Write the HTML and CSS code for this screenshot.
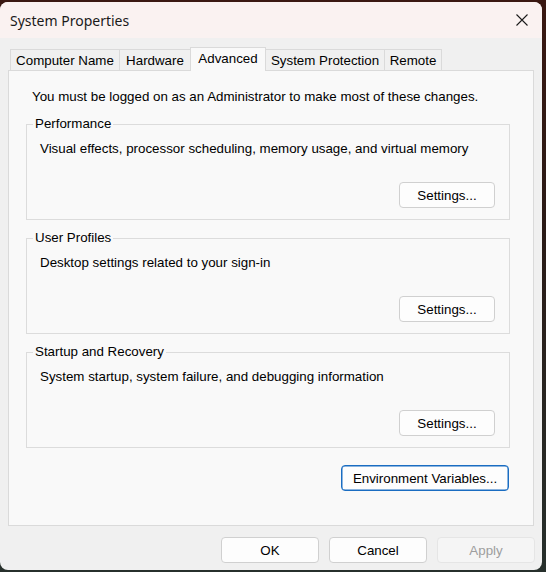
FILE: index.html
```html
<!DOCTYPE html>
<html lang="en">
<head>
<meta charset="utf-8">
<title>System Properties</title>
<link rel="stylesheet" href="styles.css">
</head>
<body>
<div class="window">
  <div class="titlebar">
    <span class="title">System Properties</span>
    <button class="close" aria-label="Close">
      <svg width="12" height="12" viewBox="0 0 12 12"><path d="M0.5 0.5 L11.5 11.5 M11.5 0.5 L0.5 11.5" stroke="#1b1b1b" stroke-width="1.1" fill="none"/></svg>
    </button>
  </div>
  <div class="content">
    <div class="tabs">
      <div class="tab tab-name">Computer Name</div>
      <div class="tab tab-hardware">Hardware</div>
      <div class="tab tab-advanced selected">Advanced</div>
      <div class="tab tab-protection">System Protection</div>
      <div class="tab tab-remote">Remote</div>
    </div>
    <div class="panel">
      <p class="intro">You must be logged on as an Administrator to make most of these changes.</p>
      <fieldset class="group">
        <legend>Performance</legend>
        <p class="desc">Visual effects, processor scheduling, memory usage, and virtual memory</p>
        <div class="group-actions"><button class="btn btn-settings">Settings...</button></div>
      </fieldset>
      <fieldset class="group">
        <legend>User Profiles</legend>
        <p class="desc">Desktop settings related to your sign-in</p>
        <div class="group-actions"><button class="btn btn-settings">Settings...</button></div>
      </fieldset>
      <fieldset class="group">
        <legend>Startup and Recovery</legend>
        <p class="desc">System startup, system failure, and debugging information</p>
        <div class="group-actions"><button class="btn btn-settings">Settings...</button></div>
      </fieldset>
      <div class="panel-actions"><button class="btn btn-env">Environment Variables...</button></div>
    </div>
    <div class="dialog-actions">
      <button class="btn btn-dialog">OK</button>
      <button class="btn btn-dialog">Cancel</button>
      <button class="btn btn-dialog disabled" disabled>Apply</button>
    </div>
  </div>
</div>
</body>
</html>
```
FILE: styles.css
```css
html, body {
  margin: 0;
  height: 100%;
}

body {
  box-sizing: border-box;
  padding-top: 2px;
  background: linear-gradient(180deg, #3a1812 0%, #2a1a16 40%, #27302c 100%);
  font-family: "Liberation Sans", Arial, sans-serif;
  font-size: 13.33px;
  color: #000;
  overflow: hidden;
}

.window {
  width: 542px;
  height: 568px;
  background: #f0f0f0;
  border-radius: 8px;
  overflow: hidden;
  display: flex;
  flex-direction: column;
}

/* title bar */
.titlebar {
  height: 36px;
  flex: none;
  background: #faf2f1;
  display: flex;
  align-items: center;
  justify-content: space-between;
  padding: 0 14px 0 10px;
}

.title {
  font-family: "Noto Sans", "Open Sans", sans-serif;
  font-size: 14px;
  color: #1a1a1a;
}

.close {
  border: 0;
  background: none;
  padding: 0;
  width: 12px;
  height: 12px;
  display: block;
}

.close svg {
  display: block;
}

/* dialog body */
.content {
  flex: 1;
  display: flex;
  flex-direction: column;
  padding: 9px 8px 0;
}

.tabs {
  position: relative;
  z-index: 1;
  height: 24px;
  margin-bottom: -1px;
  padding-left: 2px;
  display: flex;
  align-items: flex-end;
}

.tab {
  box-sizing: border-box;
  height: 21px;
  margin-bottom: 1px;
  border: 1px solid #dadada;
  border-bottom: 0;
  background: #f0f0f0;
  line-height: 21px;
  text-align: center;
  white-space: nowrap;
}

.tab + .tab {
  margin-left: -1px;
}

.tab-name { width: 110px; }
.tab-hardware { width: 72px; }
.tab-advanced { width: 76px; }
.tab-protection { width: 120px; }
.tab-remote { width: 58px; }

.tab.selected {
  height: 24px;
  margin-bottom: 0;
  background: #f9f9f9;
  line-height: 21px;
  position: relative;
  z-index: 2;
}

.panel {
  box-sizing: border-box;
  height: 456px;
  flex: none;
  border: 1px solid #dadada;
  background: #f9f9f9;
  padding: 18px 23px 0 17px;
}

.intro {
  margin: 0 0 11px 6px;
  line-height: 16px;
}

.group {
  margin: 0 0 10px;
  min-width: 0;
  border: 1px solid #dcdcdc;
  padding: 9px 14px 11px 13px;
  line-height: 16px;
}

.group legend {
  margin-left: -7px;
  padding: 0 2px;
  line-height: 16px;
}

.desc {
  margin: 0;
  line-height: 16px;
}

.group-actions {
  margin-top: 25px;
  display: flex;
  justify-content: flex-end;
}

.panel-actions {
  margin-top: 17px;
  padding-right: 1px;
  display: flex;
  justify-content: flex-end;
}

/* push buttons */
.btn {
  box-sizing: border-box;
  height: 26px;
  padding: 0;
  border: 1px solid #d0d0d0;
  border-radius: 4px;
  background: #fdfdfd;
  font-family: inherit;
  font-size: 13.33px;
  color: #000;
}

.btn-settings {
  width: 96px;
}

.btn-env {
  width: 168px;
  border-color: #1a6dc2;
  box-shadow: inset 0 0 0 0.5px #1a6dc2;
}

.dialog-actions {
  flex: none;
  margin: 11px -1px 7px 0;
  display: flex;
  justify-content: flex-end;
  gap: 10px;
}

.btn-dialog {
  width: 98px;
}

.btn-dialog.disabled {
  background: #f5f5f5;
  border-color: #e5e5e5;
  color: #9e9e9e;
}
```
